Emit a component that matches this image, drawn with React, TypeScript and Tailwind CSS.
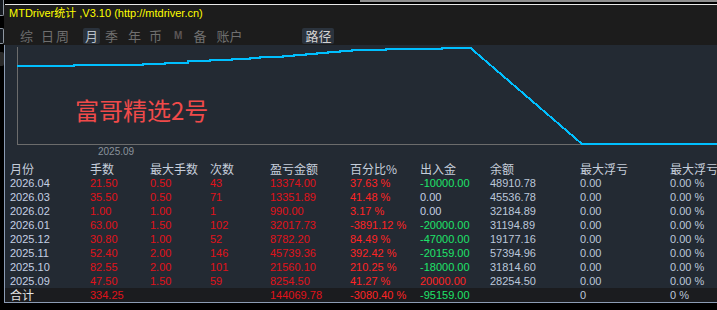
import React from "react";

const rows: string[][] = [
  ["2026.04", "21.50", "0.50", "43", "13374.00", "37.63 %", "-10000.00", "48910.78", "0.00", "0.00 %"],
  ["2026.03", "35.50", "0.50", "71", "13351.89", "41.48 %", "0.00", "45536.78", "0.00", "0.00 %"],
  ["2026.02", "1.00", "1.00", "1", "990.00", "3.17 %", "0.00", "32184.89", "0.00", "0.00 %"],
  ["2026.01", "63.00", "1.50", "102", "32017.73", "-3891.12 %", "-20000.00", "31194.89", "0.00", "0.00 %"],
  ["2025.12", "30.80", "1.00", "52", "8782.20", "84.49 %", "-47000.00", "19177.16", "0.00", "0.00 %"],
  ["2025.11", "52.40", "2.00", "146", "45739.36", "392.42 %", "-20159.00", "57394.96", "0.00", "0.00 %"],
  ["2025.10", "82.55", "2.00", "101", "21560.10", "210.25 %", "-18000.00", "31814.60", "0.00", "0.00 %"],
  ["2025.09", "47.50", "1.50", "59", "8254.50", "41.27 %", "20000.00", "28254.50", "0.00", "0.00 %"],
];

const widths = ["w-[80px]", "w-[60px]", "w-[60px]", "w-[60px]", "w-[80px]", "w-[70px]", "w-[70px]", "w-[90px]", "w-[90px]", "w-[60px]"];
const headers = ["月份", "手数", "最大手数", "次数", "盈亏金额", "百分比%", "出入金", "余额", "最大浮亏", "最大浮亏%"];

const cjk = "font-['Noto_Sans_CJK_SC',sans-serif]";
const num = "font-['Liberation_Sans','Noto_Sans_CJK_SC',sans-serif]";

function cellColor(ci: number, v: string): string {
  if (ci === 0) return "text-[#c4cfe3]";
  if (ci >= 1 && ci <= 4) return "text-[#e0121a]";
  if (ci === 5) return "text-[#ff2424]";
  if (ci === 6) {
    if (v.startsWith("-")) return "text-[#1ee36a]";
    if (v === "0.00") return "text-[#c4cfe3]";
    return "text-[#ff2424]";
  }
  return "text-[#bcc7da]";
}

const linePts: [number, number][] = [
  [17, 65.5], [74, 65.5], [74, 64.5], [143, 64.5], [143, 63.5], [165, 63.5], [165, 62.5], [188, 62.5],
  [188, 61.3], [210, 61.3], [210, 60], [232, 60], [232, 59], [250, 59], [250, 58], [260, 58], [260, 57],
  [283, 57], [283, 56], [294, 56], [294, 55], [306, 55], [306, 54], [317, 54], [317, 53], [328, 53],
  [328, 52], [340, 52], [340, 51], [352, 51], [352, 50], [386, 50], [386, 49], [442, 49], [442, 47.5],
  [470, 47.5], [582, 144], [717, 144],
];

function Tab({ label, ml, active, dim }: { label: string; ml: string; active?: boolean; dim?: boolean }) {
  return (
    <div
      className={
        ml +
        " h-[16px] leading-[16px] flex items-center justify-center " +
        (active ? "bg-[#2a323c] rounded-[2px] px-[2px] text-[#b9c1ca]" : dim ? "text-[#5d5656]" : "text-[#6f6f6f]")
      }
    >
      <span className={dim ? "font-['Liberation_Sans',sans-serif] font-bold text-[10px]" : "text-[13px]"}>{label}</span>
    </div>
  );
}

export default function App() {
  return (
    <div className="w-[717px] h-[310px] bg-black flex overflow-hidden">
      {/* left strip of neighbouring window */}
      <div className="w-[4px] flex flex-col shrink-0">
        <div className="h-[16px] bg-[#161a20] border-r border-b border-[#8e96a0] rounded-br-[2px]" />
        <div className="h-[12px]" />
        <div className="h-[16px] bg-[#161a20] border-r border-y border-[#8e96a0] rounded-r-[2px]" />
        <div className="h-[8px]" />
        <div className="h-[14px] bg-[#2a2a2a] rounded-r-[2px]" />
      </div>

      <div className="flex-1 flex flex-col min-w-0">
        {/* top edge */}
        <div className="h-[4px] flex">
          <div className="w-[356px]" />
          <div className="flex-1 h-[2px] bg-[#8e8e8e]" />
        </div>
        <div className="h-px bg-[#e8e8e8] ml-px" />

        {/* header panel */}
        <div className={"h-[40px] bg-[#1c1c1c] flex flex-col " + cjk}>
          <div className={"h-[17px] leading-[17px] pl-[5px] text-[11px] text-[#ffff00] " + num}>
            MTDriver统计 ,V3.10 (http://mtdriver.cn)
          </div>
          <div className="mt-[6px] h-[16px] flex">
            <Tab label="综" ml="ml-[16px]" />
            <Tab label="日" ml="ml-[8px]" />
            <Tab label="周" ml="ml-[2px]" />
            <Tab label="月" ml="ml-[14px]" active />
            <Tab label="季" ml="ml-[5px]" />
            <Tab label="年" ml="ml-[10px]" />
            <Tab label="币" ml="ml-[8px]" />
            <Tab label="M" ml="ml-[12px]" dim />
            <Tab label="备" ml="ml-[11px]" />
            <Tab label="账户" ml="ml-[10px]" />
            <div className="ml-[60px] h-[16px] w-[32px] bg-[#2b333d] rounded-[2px] flex items-center justify-center text-[13px] text-[#d2d2d2] leading-[16px]">
              路径
            </div>
          </div>
        </div>

        {/* main area */}
        <div className="border-l border-b border-[#8b9bb3] flex flex-col">
          {/* chart */}
          <div className="relative h-[117px] bg-[#232a33]">
            <svg className="absolute inset-0" width="712" height="117" viewBox="5 45 712 117">
              <line x1="17.5" y1="47" x2="17.5" y2="144.5" stroke="#6c6c6c" strokeWidth="1" />
              <line x1="17" y1="144.5" x2="582" y2="144.5" stroke="#6c6c6c" strokeWidth="1" />
              <polyline
                points={linePts.map((p) => p.join(",")).join(" ")}
                fill="none"
                stroke="#00bfff"
                strokeWidth="2"
                shapeRendering="crispEdges"
              />
            </svg>
            <div className={"absolute left-[70px] top-[53px] text-[24px] leading-none text-[#f04a4a] " + cjk}>富哥精选2号</div>
            <div className={"absolute left-[93px] top-[102px] text-[10px] leading-none text-[#8a929c] " + num}>2025.09</div>
          </div>

          {/* table */}
          <div className="bg-[#232a33] pl-[5px]">
            <div className={"flex h-[14px] leading-[14px] text-[12px] text-[#c6cedb] whitespace-nowrap " + cjk}>
              {headers.map((h, i) => (
                <div key={i} className={widths[i] + " shrink-0"}>
                  {h}
                </div>
              ))}
            </div>
            {rows.map((r, ri) => (
              <div key={ri} className={"flex h-[14px] leading-[14px] text-[11px] whitespace-nowrap " + num}>
                {r.map((v, ci) => (
                  <div key={ci} className={widths[ci] + " shrink-0 " + cellColor(ci, v)}>
                    {v}
                  </div>
                ))}
              </div>
            ))}
          </div>
          <div className={"flex h-[14px] leading-[14px] text-[11px] whitespace-nowrap bg-[#1b1c1f] pl-[5px] " + num}>
            <div className={"w-[80px] shrink-0 text-[12px] text-[#e4e4e4] " + cjk}>合计</div>
            <div className="w-[60px] shrink-0 text-[#e0121a]">334.25</div>
            <div className="w-[60px] shrink-0" />
            <div className="w-[60px] shrink-0" />
            <div className="w-[80px] shrink-0 text-[#e0121a]">144069.78</div>
            <div className="w-[70px] shrink-0 text-[#ff2424]">-3080.40 %</div>
            <div className="w-[70px] shrink-0 text-[#1ee36a]">-95159.00</div>
            <div className="w-[90px] shrink-0" />
            <div className="w-[90px] shrink-0 text-[#bcc7da]">0</div>
            <div className="w-[60px] shrink-0 text-[#bcc7da]">0 %</div>
          </div>
        </div>
      </div>
    </div>
  );
}
